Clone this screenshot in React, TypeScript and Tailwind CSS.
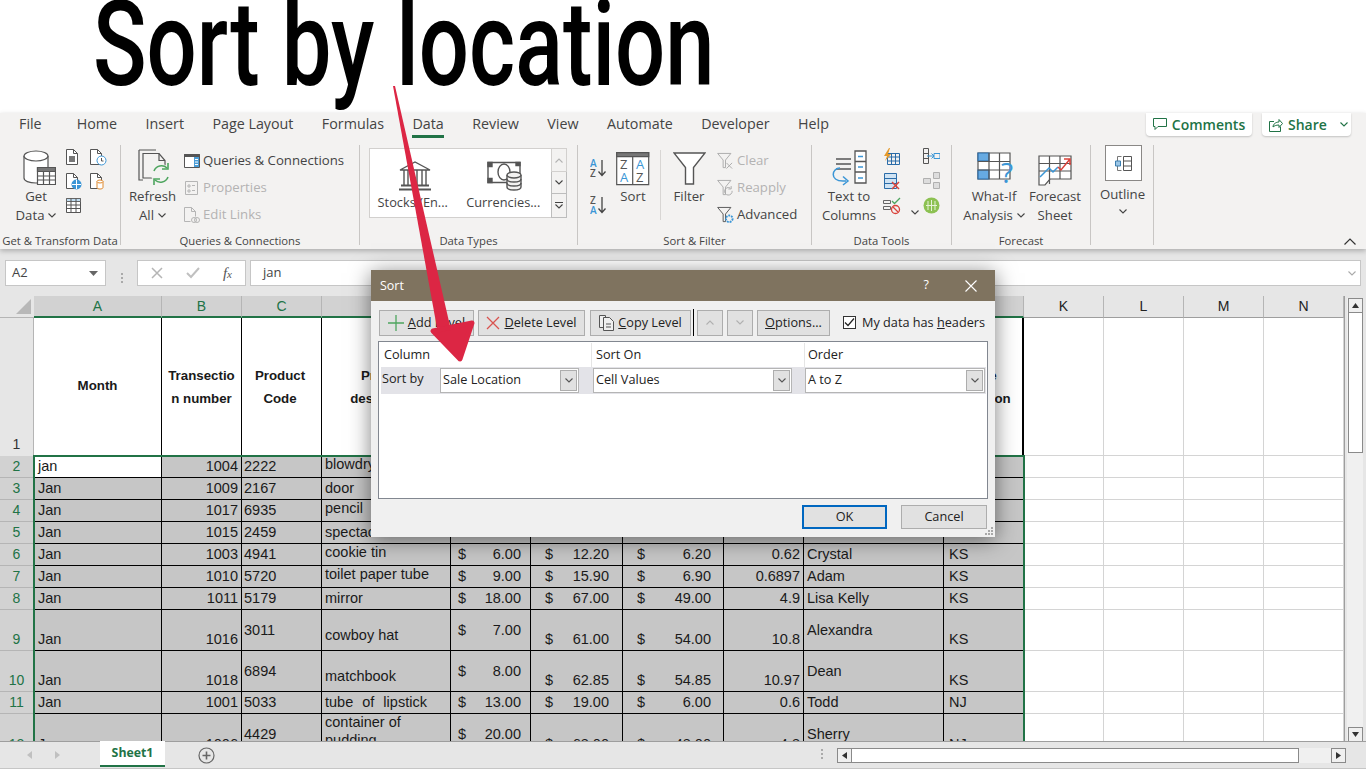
import type { ReactNode } from 'react'

const STROKE = '#555'
const BLUE = '#3b96d6'

const Chev = ({ up = false, color = '#444' }: { up?: boolean; color?: string }) => (
  <svg width="8" height="5" viewBox="0 0 8 5" fill="none" stroke={color} strokeWidth="1.1">
    <path d={up ? 'M.5 4.5 4 1l3.5 3.5' : 'M.5.5 4 4 7.5.5'} />
  </svg>
)

const Doc = ({ children }: { children?: ReactNode }) => (
  <svg width="18" height="18" viewBox="0 0 18 18" fill="none" stroke={STROKE}>
    <path d="M1.5 1.5h7l4 4v11h-11z" fill="#fff" />
    <path d="M8.5 1.5v4h4" />
    {children}
  </svg>
)

const TableIcon = () => (
  <svg width="17" height="17" viewBox="0 0 17 17" fill="none" stroke={STROKE}>
    <path d="M1.5 1.5h14v14h-14z" fill="#fff" />
    <path d="M1.5 1.5h14v3h-14z" fill="#bfdcf0" stroke="#666" />
    <path d="M1.5 8h14M1.5 11.5h14M6 1.5v14M11 1.5v14" />
  </svg>
)

const GetDataIcon = () => (
  <svg className="ml-[6px]" width="33" height="36" viewBox="0 0 33 36" fill="none" stroke={STROKE} strokeWidth="1.2">
    <path d="M1 6v22c0 3 5 5 12 5s12-2 12-5V6" fill="#fff" />
    <ellipse cx="13" cy="6" rx="12" ry="5" fill="#fff" />
    <path d="M14.5 17.5h18v17h-18z" fill="#fff" />
    <path d="M14.5 17.5h18v4h-18z" fill="#777" />
    <path d="M14.5 26h18M14.5 30h18M20.5 21v13.5M26.5 21v13.5" />
  </svg>
)

const RefreshIcon = () => (
  <svg className="ml-[4px]" width="34" height="37" viewBox="0 0 34 37" fill="none" stroke={STROKE} strokeWidth="1.2">
    <path d="M1 1h17M1 1v30h4" />
    <path d="M5 4.500h16l6 7V29H5z" fill="#f3f2f1" />
    <path d="M21 4.500v7h6" />
    <circle cx="23" cy="25" r="10" fill="#f3f2f1" stroke="none" />
    <path d="M16 22a8 8 0 0 1 13-3M30 28a8 8 0 0 1-13 3" stroke="#4ea55f" strokeWidth="1.600" />
    <path d="M30 14v6h-6M16 36v-6h6" stroke="#4ea55f" strokeWidth="1.600" />
  </svg>
)

const QueriesIcon = () => (
  <svg width="16" height="16" viewBox="0 0 16 16" fill="none" stroke={STROKE}>
    <path d="M.5 1.500h15v13H.5z" fill="#fff" />
    <path d="M.5 1.500h15v2H.5z" fill="#555" />
    <path d="M10 4h5v10h-5z" fill="#4a9cd6" stroke="none" />
    <path d="M11 6.500h3M11 9h3M11 11.500h3" stroke="#fff" />
  </svg>
)

const PropertiesIcon = () => (
  <svg width="15" height="16" viewBox="0 0 15 16" fill="none" stroke="#b5b5b5">
    <path d="M1.500 1.500h12v13h-12z" />
    <path d="M4 5h2v2H4zM4 10h2v2H4zM8 5.500h3M8 10.500h3" />
  </svg>
)

const EditLinksIcon = () => (
  <svg width="17" height="18" viewBox="0 0 17 18" fill="none" stroke="#b5b5b5">
    <path d="M1.500 1.500h7l4 4v5M1.500 1.500v14h6" />
    <path d="M8.500 1.500v4h4" />
    <circle cx="11" cy="14" r="2.500" />
    <circle cx="14" cy="14" r="2.500" />
  </svg>
)

const Bank = () => (
  <svg className="ml-[5px]" width="34" height="30" viewBox="0 0 34 30" fill="none" stroke={STROKE} strokeWidth="1.400">
    <path d="M2 9 17 1l15 8z" />
    <path d="M6 9v15M10 9v15M15 9v15M19 9v15M24 9v15M28 9v15" />
    <path d="M3 24.500h28M1 28.500h32" strokeWidth="2" />
  </svg>
)

const Money = () => (
  <svg className="ml-[3px]" width="35" height="30" viewBox="0 0 35 30" fill="none" stroke={STROKE} strokeWidth="1.400">
    <path d="M1 1.500h32v20H1z" />
    <path d="M1 1.500h4v4H1zM29 1.500h4v3h-4zM1 17.500h4v4H1z" fill={STROKE} />
    <ellipse cx="17" cy="11" rx="6" ry="8" />
    <g fill="#f3f2f1">
      <path d="M20 14v12c0 2 3 3 7 3s7-1 7-3V14" />
      <ellipse cx="27" cy="14" rx="7" ry="3" />
      <path d="M20 18c0 2 3 3 7 3s7-1 7-3M20 22c0 2 3 3 7 3s7-1 7-3" fill="none" />
    </g>
  </svg>
)

const AzSmall = ({ flip = false }: { flip?: boolean }) => (
  <svg width="17" height="21" viewBox="0 0 17 21" fill="none">
    <text x="0" y="9" fontSize="10" fontFamily="Open Sans" fontWeight="600" fill={flip ? '#555' : BLUE}>{flip ? 'Z' : 'A'}</text>
    <text x="0" y="19" fontSize="10" fontFamily="Open Sans" fontWeight="600" fill={flip ? BLUE : '#555'}>{flip ? 'A' : 'Z'}</text>
    <path d="M12 2v15M8.500 13.500 12 17.500l3.500-4" stroke="#444" strokeWidth="1.300" />
  </svg>
)

const SortIcon = () => (
  <svg width="34" height="34" viewBox="0 0 34 34" fill="none" stroke={STROKE} strokeWidth="1.200">
    <path d="M.7.700h32v32H.7z" fill="#fff" />
    <path d="M.7.700h32v4H.7z" fill="#777" />
    <path d="M16.700 4.700v28" />
    <g stroke="none" fontFamily="Open Sans" fontSize="13">
      <text x="4" y="17" fill="#555">Z</text>
      <text x="4" y="30" fill={BLUE}>A</text>
      <text x="20" y="17" fill={BLUE}>A</text>
      <text x="20" y="30" fill="#555">Z</text>
    </g>
  </svg>
)

const FilterIcon = () => (
  <svg width="33" height="34" viewBox="0 0 33 34" fill="#fff" stroke={STROKE} strokeWidth="1.400">
    <path d="M1 1h31L20.500 15.500V32h-8V15.500z" />
  </svg>
)

const SmallFunnel = ({ color, children }: { color: string; children?: ReactNode }) => (
  <svg width="18" height="18" viewBox="0 0 18 18" fill="none" stroke={color}>
    <path d="M.7 1h14L9 8v8H6.500V8z" />
    {children}
  </svg>
)

const TextColumns = () => (
  <svg width="38" height="36" viewBox="0 0 38 36" fill="none" stroke={STROKE} strokeWidth="1.300">
    <path d="M6 9h15M6 14h15M6 19h15" />
    <path d="M25 1h11v32H25z" fill="#fff" />
    <path d="M25 11.500h11M25 22h11" />
    <path d="M28 6.500h5M28 17h5M28 28h5" stroke={BLUE} />
    <path d="M10 18C2 18-1 31 13 31h3M13 26.500l5 4.500-5 4" stroke={BLUE} strokeWidth="1.500" />
  </svg>
)

const FlashFill = () => (
  <svg width="17" height="17" viewBox="0 0 17 17" fill="none">
    <path d="M4.500 5.500h12v11h-12z" stroke="#2b6ca8" />
    <path d="M4.500 9h12M4.500 13h12M8.500 5.500v11M12.500 5.500v11" stroke="#2b6ca8" />
    <path d="M6 0 1 8h3l-2 5 6-7H5l2-6z" fill="#e59a2b" />
  </svg>
)

const RemoveDup = () => (
  <svg width="17" height="18" viewBox="0 0 17 18" fill="none">
    <path d="M1.500 1.500h12v15h-12z" fill="#cfe3f3" stroke="#2b6ca8" />
    <path d="M1.500 6.500h12M1.500 11.500h12" stroke="#2b6ca8" />
    <path d="M9 10l7 7M16 10l-7 7" stroke="#d9423a" strokeWidth="1.500" />
  </svg>
)

const Validation = () => (
  <svg width="18" height="18" viewBox="0 0 18 18" fill="none" stroke="#666">
    <path d="M.5 3.500h7v3h-7zM.5 9.500h7v3h-7z" />
    <path d="M9 4l2.500 2.500L17 1" stroke="#4ea55f" strokeWidth="1.300" />
    <circle cx="12.500" cy="12.500" r="4" stroke="#d9423a" strokeWidth="1.300" />
    <path d="m10 10 5 5" stroke="#d9423a" strokeWidth="1.300" />
  </svg>
)

const Consolidate = () => (
  <svg width="17" height="16" viewBox="0 0 17 16" fill="none" stroke="#555">
    <path d="M.5.500h5v15h-5zM.5 5.500h5M.5 10.500h5" />
    <path d="M4 8h7M8.500 5.500 11 8l-2.500 2.500" stroke={BLUE} />
    <path d="M11 5.500h6v5h-6z" stroke={BLUE} />
  </svg>
)

const Relations = () => (
  <svg width="17" height="17" viewBox="0 0 17 17" fill="#ddd" stroke="#b0b0b0">
    <path d="M.5 6.500h7v5h-7zM10.500.500h6v6h-6zM10.500 10.500h6v6h-6z" />
  </svg>
)

const DataModel = () => (
  <svg width="17" height="17" viewBox="0 0 17 17">
    <circle cx="8.500" cy="8.500" r="8" fill="#8cc152" />
    <path d="M5 4v9M8.500 3v11M12 4v9M3 8.500h11" stroke="#e6f2d8" fill="none" />
  </svg>
)

const WhatIf = () => (
  <svg className="ml-[2px]" width="37" height="34" viewBox="0 0 37 34" fill="none" stroke={STROKE} strokeWidth="1.200">
    <path d="M1 1h32v26H1z" fill="#fff" />
    <path d="M1 1h11v8H1zM1 18h11v9H1z" fill="#66aae2" stroke="#2b6ca8" />
    <path d="M1 9.500h32M1 18h32M12 1v26M22.500 1v26" />
    <text x="24" y="31" fontSize="28" fontFamily="Open Sans" fill="#3b96d6" stroke="none">?</text>
  </svg>
)

const Forecast = () => (
  <svg width="34" height="31" viewBox="0 0 34 31" fill="none" stroke={STROKE} strokeWidth="1.200">
    <path d="M1 1h32v23H12l-5 6H1z" fill="#fff" />
    <path d="M1 8.500h32M1 16h32M11.500 1v28M22 1v23" />
    <path d="M2 22 11 13l4 4 5-5" stroke={BLUE} strokeWidth="1.500" />
    <path d="M20 12l3 3 9-11M26 4h6v6" stroke="#d9423a" strokeWidth="1.500" />
  </svg>
)

const OutlineIcon = () => (
  <svg width="17" height="15" viewBox="0 0 17 15" fill="none" stroke="#777">
    <path d="M2.500.500h4M2.500 14.500h4M2.500.500v14" />
    <path d="M.5 5h5v5h-5z" fill="#9cc6e6" stroke="#3b7eb0" />
    <path d="M8.500.500h8v14h-8zM8.500 5h8M8.500 10h8" stroke="#555" />
  </svg>
)

const Large = ({ w, icon, l1, l2, chev = false }: { w: string; icon: ReactNode; l1: string; l2: string; chev?: boolean }) => (
  <div className={`flex flex-col items-center shrink-0 ${w}`}>
    <div className="h-[42px] flex items-end justify-center pb-[1px]">{icon}</div>
    <div className="leading-[19px] text-center">{l1}</div>
    <div className="leading-[19px] flex items-center gap-[4px] whitespace-nowrap">
      {l2}
      {chev && <Chev />}
    </div>
  </div>
)

const SmallRow = ({ icon, label, off = false }: { icon: ReactNode; label: string; off?: boolean }) => (
  <div className={`h-[27px] flex items-center gap-[3px] whitespace-nowrap ${off ? 'text-[#b3b3b3]' : ''}`}>
    <div className="w-[17px] flex justify-center">{icon}</div>
    {label}
  </div>
)

const Sep = () => <div className="w-px h-[100px] mt-[5px] bg-[#c8c6c4] shrink-0" />

const Group = ({ w, label, children }: { w: string; label: string; children: ReactNode }) => (
  <div className={`${w} shrink-0 flex flex-col h-[109px] pt-[5px]`}>
    <div className="h-[88px] flex">{children}</div>
    <div className="h-[16px] leading-[16px] text-center text-[11.3px] whitespace-nowrap">{label}</div>
  </div>
)

const TABS = ['Home', 'Insert', 'Page Layout', 'Formulas', 'Data', 'Review', 'View', 'Automate', 'Developer', 'Help']

const Ribbon = () => (
  <div className="bg-[#f3f2f1] h-[136px] shrink-0 text-[#444] text-[13.2px] shadow-[0_2px_5px_rgba(0,0,0,0.25)] relative z-10 font-['Open_Sans',sans-serif]">
    <div className="h-[27px] flex text-[14.3px]">
      <div className="ml-[19px] mr-[35px] leading-[22px]">File</div>
      <div className="flex gap-[28.4px]">
        {TABS.map((t) => (
          <div key={t} className={`h-[25px] leading-[22px] ${t === 'Data' ? 'border-b-[3px] border-[#217346]' : ''}`}>{t}</div>
        ))}
      </div>
      <div className="ml-auto flex gap-[10px] mr-[15px] text-[#217346] font-semibold text-[14px]">
        <div className="w-[106px] h-[23px] bg-white rounded-b-sm shadow-[0_1px_2px_rgba(0,0,0,0.2)] flex items-center justify-center gap-[5px]">
          <svg width="14" height="13" viewBox="0 0 14 13" fill="none" stroke="#217346"><path d="M.5.500h13v8H5l-3 3v-3H.5z" /></svg>
          Comments
        </div>
        <div className="w-[89px] h-[23px] bg-white rounded-b-sm shadow-[0_1px_2px_rgba(0,0,0,0.2)] flex items-center pl-[7px] gap-[5px]">
          <svg width="14" height="14" viewBox="0 0 14 14" fill="none" stroke="#217346"><path d="M5 3.500H.5v10h11v-5M4 9c0-3 3-5 6-5V1.500l3.500 4-3.500 4V7C7 7 5 8 4 9z" /></svg>
          Share
          <span className="ml-[8px]"><Chev color="#217346" /></span>
        </div>
      </div>
    </div>
    <div className="flex h-[109px]">
      <Group w="w-[120px]" label="Get & Transform Data">
        <div className="ml-[8px]"><Large w="w-[56px]" icon={<GetDataIcon />} l1="Get" l2="Data" chev /></div>
        <div className="ml-[1px] pt-[3px] grid grid-cols-[24px_18px] grid-rows-[24px_25px_20px]">
          <Doc><path d="M4 8h6v6H4z" fill="#777" stroke="none" /></Doc>
          <Doc><circle cx="12.500" cy="12.500" r="4.500" fill="#fff" stroke={BLUE} /><path d="M12.500 10v3h2" stroke="#555" /></Doc>
          <Doc><circle cx="11.500" cy="12.500" r="5" fill={BLUE} stroke="none" /><path d="M7 12.500h9M11.500 8v9" stroke="#fff" /></Doc>
          <Doc><path d="M8 9.500v6c0 2 6 2 6 0v-6z" fill="#fff" stroke="#e08a2e" /><ellipse cx="11" cy="9.500" rx="3" ry="1.500" fill="#fff" stroke="#e08a2e" /></Doc>
          <TableIcon />
        </div>
      </Group>
      <Sep />
      <Group w="w-[238px]" label="Queries & Connections">
        <div className="ml-[1px]"><Large w="w-[61px]" icon={<RefreshIcon />} l1="Refresh" l2="All" chev /></div>
        <div className="pt-[2px]">
          <SmallRow icon={<QueriesIcon />} label="Queries & Connections" />
          <SmallRow off icon={<PropertiesIcon />} label="Properties" />
          <SmallRow off icon={<EditLinksIcon />} label="Edit Links" />
        </div>
      </Group>
      <Sep />
      <Group w="w-[217px]" label="Data Types">
        <div className="ml-[9px] mt-[3px] flex h-[70px] text-[12.8px]">
          <div className="w-[183px] bg-white border border-[#d2d0ce] flex">
            <div className="w-[86px] flex flex-col items-center">
              <div className="h-[42px] flex items-end"><Bank /></div>
              <div className="leading-[22px]">Stocks (En...</div>
            </div>
            <div className="w-[96px] flex flex-col items-center">
              <div className="h-[42px] flex items-end"><Money /></div>
              <div className="leading-[22px]">Currencies...</div>
            </div>
          </div>
          <div className="w-[16px] flex flex-col -ml-px">
            <div className="h-[24px] border border-[#d2d0ce] flex items-center justify-center"><Chev up color="#b3b3b3" /></div>
            <div className="h-[22px] border border-t-0 border-[#bdbdbd] flex items-center justify-center"><Chev /></div>
            <div className="h-[24px] border border-t-0 border-[#bdbdbd] flex flex-col items-center justify-center gap-[1px]">
              <div className="w-[8px] h-px bg-[#444]" />
              <Chev />
            </div>
          </div>
        </div>
      </Group>
      <Sep />
      <Group w="w-[233px]" label="Sort & Filter">
        <div className="ml-[12px] w-[22px] pt-[13px] flex flex-col gap-[16px]"><AzSmall /><AzSmall flip /></div>
        <Large w="w-[42px]" icon={<SortIcon />} l1="Sort" l2="" />
        <div className="w-px h-[70px] mt-[5px] ml-[6px] bg-[#d8d6d4]" />
        <div className="ml-[7px]"><Large w="w-[42px]" icon={<FilterIcon />} l1="Filter" l2="" /></div>
        <div className="ml-[7px] pt-[2px]">
          <SmallRow off icon={<SmallFunnel color="#aaa"><path d="M10 11l6 6M16 11l-6 6" /></SmallFunnel>} label="Clear" />
          <SmallRow off icon={<SmallFunnel color="#aaa"><path d="M16 12a4 4 0 1 1-2-3M15 7v3h-3" /></SmallFunnel>} label="Reapply" />
          <SmallRow icon={<SmallFunnel color="#555"><circle cx="13" cy="13" r="3.500" stroke={BLUE} strokeWidth="2" strokeDasharray="2 1" /></SmallFunnel>} label="Advanced" />
        </div>
      </Group>
      <Sep />
      <Group w="w-[139px]" label="Data Tools">
        <div className="ml-[10px]"><Large w="w-[54px]" icon={<TextColumns />} l1="Text to" l2="Columns" /></div>
        <div className="ml-[7px] pt-[3px] flex flex-col gap-[7px] w-[18px]"><FlashFill /><RemoveDup /><Validation /></div>
        <div className="ml-[10px] w-[12px] pt-[65px]"><Chev /></div>
        <div className="pt-[3px] flex flex-col gap-[8px]"><Consolidate /><Relations /><DataModel /></div>
      </Group>
      <Sep />
      <Group w="w-[138px]" label="Forecast">
        <div className="ml-[10px]"><Large w="w-[64px]" icon={<WhatIf />} l1="What-If" l2="Analysis" chev /></div>
        <Large w="w-[58px]" icon={<Forecast />} l1="Forecast" l2="Sheet" />
      </Group>
      <Sep />
      <Group w="w-[62px]" label="">
        <div className="w-full flex flex-col items-center pl-[1px]">
          <div className="w-[37px] h-[36px] bg-white border border-[#8a8886] flex items-center justify-center ml-[1px]"><OutlineIcon /></div>
          <div className="leading-[19px] mt-[4px]">Outline</div>
          <div className="mt-[5px]"><Chev /></div>
        </div>
      </Group>
      <Sep />
      <div className="ml-auto self-end mr-[10px] mb-[4px]">
        <svg width="12" height="7" viewBox="0 0 12 7" fill="none" stroke="#333" strokeWidth="1.200"><path d="M.5 6.500 6 1l5.500 5.500" /></svg>
      </div>
    </div>
  </div>
)

const FormulaBar = () => (
  <div className="h-[47px] shrink-0 bg-[#e6e6e6] flex pt-[11px] pl-[5px] pr-[5px] font-['Open_Sans',sans-serif] text-[13px] text-[#444]">
    <div className="w-[101px] h-[26px] bg-white border border-[#c6c6c6] flex items-center justify-between pl-[6px] pr-[7px]">
      A2
      <svg width="9" height="5" viewBox="0 0 9 5" fill="#666"><path d="M0 0h9L4.500 5z" /></svg>
    </div>
    <div className="w-[31px] flex flex-col items-center justify-center gap-[2px]">
      <div className="w-[2px] h-[2px] bg-[#aaa]" /><div className="w-[2px] h-[2px] bg-[#aaa]" /><div className="w-[2px] h-[2px] bg-[#aaa]" />
    </div>
    <div className="w-[109px] h-[26px] bg-white border border-[#c6c6c6] flex items-center justify-between px-[13px]">
      <svg width="12" height="12" viewBox="0 0 12 12" stroke="#b5b5b5" strokeWidth="1.500"><path d="m1 1 10 10M11 1 1 11" /></svg>
      <svg width="14" height="12" viewBox="0 0 14 12" fill="none" stroke="#c0c0c0" strokeWidth="2"><path d="m1 6 4 4 8-9" /></svg>
      <span className="font-['Liberation_Serif',serif] italic text-[15px] text-[#555]">f<span className="text-[11px]">x</span></span>
    </div>
    <div className="ml-[4px] flex-1 h-[26px] bg-white border border-[#c6c6c6] flex items-center justify-between pl-[12px] pr-[4px]">
      jan
      <Chev color="#aaa" />
    </div>
  </div>
)

type VAlign = 'mid' | 'top' | 'low' | 'end'
type CellText = { t?: ReactNode; a?: VAlign }

const V_CLASS: Record<VAlign, string> = {
  mid: 'items-center',
  top: 'items-start leading-[16px]',
  low: 'items-end pb-[3px]',
  end: 'items-end leading-[22px]',
}

const Box = ({ a = 'mid', className = '', children }: { a?: VAlign; className?: string; children?: ReactNode }) => (
  <div className={`flex min-w-0 overflow-hidden whitespace-nowrap border-r border-b border-black ${V_CLASS[a]} ${className}`}>
    {children}
  </div>
)

const Money$ = ({ v, a = 'mid', left, right, extra = '' }: { v?: string; a?: VAlign; left: string; right: string; extra?: string }) => (
  <Box a={a} className={`bg-[#c6c6c6] justify-between ${left} ${right} ${extra}`}>
    {v && <><span>$</span><span>{v}</span></>}
  </Box>
)

type Row = {
  n: number
  tall?: boolean
  month: string
  tr: string
  code: string
  desc?: CellText
  e?: string
  f?: string
  g?: string
  h?: string
  i?: string
  j?: string
}

const ROWS: Row[] = [
  { n: 2, month: 'jan', tr: '1004', code: '2222', desc: { t: 'blowdryer', a: 'top' } },
  { n: 3, month: 'Jan', tr: '1009', code: '2167', desc: { t: 'door' } },
  { n: 4, month: 'Jan', tr: '1017', code: '6935', desc: { t: 'pencil', a: 'top' } },
  { n: 5, month: 'Jan', tr: '1015', code: '2459', desc: { t: 'spectacles' } },
  { n: 6, month: 'Jan', tr: '1003', code: '4941', desc: { t: 'cookie tin', a: 'top' }, e: '6.00', f: '12.20', g: '6.20', h: '0.62', i: 'Crystal', j: 'KS' },
  { n: 7, month: 'Jan', tr: '1010', code: '5720', desc: { t: 'toilet paper tube', a: 'top' }, e: '9.00', f: '15.90', g: '6.90', h: '0.6897', i: 'Adam', j: 'KS' },
  { n: 8, month: 'Jan', tr: '1011', code: '5179', desc: { t: 'mirror' }, e: '18.00', f: '67.00', g: '49.00', h: '4.9', i: 'Lisa Kelly', j: 'KS' },
  { n: 9, tall: true, month: 'Jan', tr: '1016', code: '3011', desc: { t: 'cowboy hat', a: 'low' }, e: '7.00', f: '61.00', g: '54.00', h: '10.8', i: 'Alexandra', j: 'KS' },
  { n: 10, tall: true, month: 'Jan', tr: '1018', code: '6894', desc: { t: 'matchbook', a: 'low' }, e: '8.00', f: '62.85', g: '54.85', h: '10.97', i: 'Dean', j: 'KS' },
  { n: 11, month: 'Jan', tr: '1001', code: '5033', desc: { t: <span className="[word-spacing:5px]">tube of lipstick</span> }, e: '13.00', f: '19.00', g: '6.00', h: '0.6', i: 'Todd', j: 'NJ' },
  { n: 12, tall: true, month: 'Jan', tr: '1006', code: '4429', desc: { t: <span className="block leading-[18px] -mt-[1px]">container of<br />pudding</span>, a: 'top' }, e: '20.00', f: '68.00', g: '48.00', h: '4.8', i: 'Sherry', j: 'NJ' },
]

const COLS = ['A', 'B', 'C', 'D', 'E', 'F', 'G', 'H', 'I', 'J']
const FREE = ['K', 'L', 'M', 'N']

const Head = ({ l1, l2, className = '' }: { l1?: string; l2?: string; className?: string }) => (
  <div className={`bg-white border-r border-black flex flex-col items-center pt-[46px] font-bold text-[13.3px] leading-[23px] whitespace-nowrap overflow-hidden ${className}`}>
    <div>{l1}</div>
    <div>{l2}</div>
  </div>
)

const FreeCells = () => (
  <>
    {FREE.map((c) => <div key={c} className="border-r border-b border-[#d4d4d4] bg-white" />)}
    <div className="bg-white" />
  </>
)

const Sheet = () => (
  <div className="relative h-[445px] w-[1344px] overflow-hidden bg-white font-['Liberation_Sans',Arial,sans-serif] text-[14.5px] text-[#1a1a1a] grid grid-cols-[34px_128px_80px_80px_129px_80px_92px_101px_80px_140px_80px_80px_80px_80px_80px_0px] grid-rows-[22px_138px_22px_22px_22px_22px_22px_22px_22px_41px_41px_22px_42px]">
    <div className="bg-[#e6e6e6] border-b border-[#b5b5b5] flex items-end justify-end p-[3px]">
      <svg width="15" height="15" viewBox="0 0 15 15"><path d="M15 0v15H0z" fill="#b8b8b8" /></svg>
    </div>
    {COLS.map((c) => (
      <div key={c} className="bg-[#d2d2d2] border-r border-[#b5b5b5] border-b-2 border-b-[#217346] flex items-center justify-center text-[#217346] text-[14px]">{c}</div>
    ))}
    {FREE.map((c) => (
      <div key={c} className="bg-[#e6e6e6] border-r border-[#b5b5b5] border-b border-b-[#9e9e9e] flex items-center justify-center text-[#222] text-[14px]">{c}</div>
    ))}
    <div className="bg-[#e6e6e6]" />

    <div className="bg-[#e6e6e6] border-r border-[#b5b5b5] flex items-end justify-center text-[#333] text-[14px] pb-[1px]">1</div>
    <div className="bg-white border-r border-black flex items-center justify-center font-bold text-[13.3px] pb-[2px]">Month</div>
    <Head l1="Transectio" l2="n number" />
    <Head l1="Product" l2="Code" className="pr-[3px]" />
    <Head l1="Product" l2="description" />
    <Head />
    <Head />
    <Head />
    <Head />
    <Head />
    <div className="bg-white border-r-2 border-black flex flex-col items-center pt-[46px] font-bold text-[13.3px] leading-[23px]">
      <div>Sale</div>
      <div>Location</div>
    </div>
    <FreeCells />

    {ROWS.map((r) => {
      const lift = r.n === 9 || r.n === 10 ? 'pt-[2px]' : ''
      return (
        <div key={r.n} className="contents">
          <div className={`bg-[#d2d2d2] border-r border-b border-[#b5b5b5] flex justify-center text-[#217346] text-[14px] ${r.tall ? 'items-end leading-[22px]' : 'items-center'}`}>{r.n}</div>
          <Box a={r.tall ? 'end' : 'mid'} className={`pl-[4px] ${r.n === 2 ? 'bg-white' : 'bg-[#c6c6c6]'}`}>{r.month}</Box>
          <Box a={r.tall ? 'end' : 'mid'} className="bg-[#c6c6c6] justify-end pr-[3px]">{r.tr}</Box>
          <Box a="mid" className={`bg-[#c6c6c6] pl-[2px] ${lift}`}>{r.code}</Box>
          <Box a={r.desc?.a} className="bg-[#c6c6c6] pl-[3px]">{r.desc?.t}</Box>
          <Money$ v={r.e} a="mid" left="pl-[7px]" right="pr-[9px]" extra={lift} />
          <Money$ v={r.f} a={r.tall ? 'end' : 'mid'} left="pl-[14px]" right="pr-[13px]" />
          <Money$ v={r.g} a={r.tall ? 'end' : 'mid'} left="pl-[14px]" right="pr-[12px]" />
          <Box a={r.tall ? 'end' : 'mid'} className="bg-[#c6c6c6] justify-end pr-[3px]">{r.h}</Box>
          <Box a="mid" className={`bg-[#c6c6c6] pl-[3px] ${lift}`}>{r.i}</Box>
          <Box a={r.tall ? 'end' : 'mid'} className="bg-[#c6c6c6] pl-[5px]">{r.j}</Box>
          <FreeCells />
        </div>
      )
    })}

    {/* selected range outline */}
    <div className="absolute left-[33px] top-[159px] w-[992px] h-[300px] border-2 border-[#217346] pointer-events-none" />
  </div>
)

const ArrowBox = ({ className = '', right = false, down = false }: { className?: string; right?: boolean; down?: boolean }) => (
  <div className={`w-[15px] h-[15px] bg-[#f0f0f0] border border-[#8a8a8a] flex items-center justify-center ${className}`}>
    <svg width="7" height="7" viewBox="0 0 7 7" fill="#333">
      {right ? <path d="M1 0l5 3.500-5 3.500z" /> : down ? <path d="M0 1h7L3.500 6z" /> : <path d="M0 6h7L3.500 1z" />}
    </svg>
  </div>
)

const VScroll = () => (
  <div className="w-[22px] h-[445px] bg-[#e6e6e6] border-l border-[#9e9e9e] flex">
    <div className="ml-[2px] mt-[2px] w-[16px] bg-[#f0f0f0] flex flex-col items-center">
      <ArrowBox />
      <div className="w-[15px] h-[140px] bg-white border border-t-0 border-[#8a8a8a]" />
      <ArrowBox down className="mt-auto mb-[-1px]" />
    </div>
  </div>
)

const SheetTabs = () => (
  <div className="h-[28px] shrink-0 bg-[#e6e6e6] border-t border-[#9e9e9e] border-b border-b-[#c6c6c6] flex font-['Open_Sans',sans-serif]">
    <div className="w-[100px] flex items-center pl-[27px] gap-[23px]">
      <svg width="5" height="8" viewBox="0 0 5 8" fill="#c0c0c0"><path d="M5 0v8L0 4z" /></svg>
      <svg width="5" height="8" viewBox="0 0 5 8" fill="#c0c0c0"><path d="M0 0v8l5-4z" /></svg>
    </div>
    <div className="w-[65px] h-[26px] -mt-px bg-white border-b-2 border-[#217346] flex items-center justify-center text-[12.3px] font-bold text-[#217346] pt-[1px]">Sheet1</div>
    <div className="ml-[33px] flex items-center">
      <svg width="17" height="17" viewBox="0 0 17 17" fill="none" stroke="#666" strokeWidth="1.200"><circle cx="8.500" cy="8.500" r="7.500" /><path d="M4.500 8.500h8M8.500 4.500v8" strokeWidth="1.600" /></svg>
    </div>
    <div className="ml-[605px] flex items-center pb-[2px] flex-col justify-center gap-[2px] w-[3px]">
      <div className="w-[2px] h-[2px] bg-[#aaa]" /><div className="w-[2px] h-[2px] bg-[#aaa]" /><div className="w-[2px] h-[2px] bg-[#aaa]" />
    </div>
    <div className="ml-[14px] mt-[6px] flex h-[15px]">
      <ArrowBox className="rotate-180" right />
      <div className="w-[447px] h-[15px] bg-white border border-l-0 border-[#8a8a8a]" />
      <div className="w-[32px] bg-[#f0f0f0]" />
      <ArrowBox right />
    </div>
  </div>
)

const DlgBtn = ({ w, className = '', children }: { w: string; className?: string; children: ReactNode }) => (
  <div className={`${w} h-[26px] bg-[#e1e1e1] border border-[#adadad] flex items-center justify-center gap-[4px] shrink-0 ${className}`}>{children}</div>
)

const Combo = ({ w, text }: { w: string; text: string }) => (
  <div className={`${w} h-[25px] bg-white border border-[#b5b5b5] flex items-center justify-between pl-[2px] pr-[1px] shrink-0`}>
    <span className="pb-[1px]">{text}</span>
    <div className="w-[17px] h-[21px] bg-[#e1e1e1] border border-[#adadad] flex items-center justify-center">
      <Chev color="#555" />
    </div>
  </div>
)

const SortDialog = () => (
  <div className="absolute left-[371px] top-[270px] w-[624px] h-[267px] bg-[#f0f0f0] z-20 shadow-[0_3px_20px_rgba(0,0,0,0.5)] flex flex-col font-['Open_Sans',sans-serif] text-[12.7px] text-[#222]">
    <div className="h-[31px] bg-[#7f735f] flex items-center text-white text-[12.5px] pl-[9px]">
      <span className="pt-[1px]">Sort</span>
      <span className="ml-auto mr-[36px]">?</span>
      <svg className="mr-[18px]" width="12" height="12" viewBox="0 0 12 12" stroke="#fff" strokeWidth="1.100"><path d="m.5.500 11 11M11.500.500l-11 11" /></svg>
    </div>
    <div className="flex items-center pt-[8px] pl-[8px]">
      <DlgBtn w="w-[95px]">
        <svg width="16" height="16" viewBox="0 0 16 16" stroke="#4ea55f" strokeWidth="1.300"><path d="M8 0v16M0 8h16" /></svg>
        <span><u>A</u>dd Level</span>
      </DlgBtn>
      <DlgBtn w="w-[107px]" className="ml-[4px]">
        <svg width="14" height="14" viewBox="0 0 14 14" stroke="#d9534f" strokeWidth="1.300"><path d="m1 1 12 12M13 1 1 13" /></svg>
        <span><u>D</u>elete Level</span>
      </DlgBtn>
      <DlgBtn w="w-[101px]" className="ml-[5px]">
        <svg width="15" height="16" viewBox="0 0 15 16" fill="#f0f0f0" stroke="#555"><path d="M.5.500h6v12h-6z" /><path d="M4.500 2.500h6l4 4v9h-10z" /><path d="M7 9h5M7 12h5" /></svg>
        <span><u>C</u>opy Level</span>
      </DlgBtn>
      <div className="w-px h-[27px] bg-black ml-[2px]" />
      <DlgBtn w="w-[26px]" className="ml-[3px]"><Chev up color="#b0b0b0" /></DlgBtn>
      <DlgBtn w="w-[26px]" className="ml-[4px]"><Chev color="#b0b0b0" /></DlgBtn>
      <DlgBtn w="w-[73px]" className="ml-[4px]"><span><u>O</u>ptions...</span></DlgBtn>
      <div className="w-[13px] h-[13px] ml-[13px] bg-white border border-[#333] flex items-center justify-center shrink-0">
        <svg width="11" height="9" viewBox="0 0 11 9" fill="none" stroke="#222" strokeWidth="1.200"><path d="m1 4.500 3 3 6-7" /></svg>
      </div>
      <span className="ml-[6px] whitespace-nowrap">My data has <u>h</u>eaders</span>
    </div>
    <div className="ml-[7px] mt-[5px] w-[610px] h-[158px] bg-white border border-[#828790] pl-[1px] pt-[1px]">
      <div className="h-[24px] flex items-center">
        <div className="w-[212px] pl-[4px] h-full flex items-center border-r border-[#e5e5e5]">Column</div>
        <div className="w-[213px] pl-[4px] h-full flex items-center border-r border-[#e5e5e5]">Sort On</div>
        <div className="pl-[3px]">Order</div>
      </div>
      <div className="ml-[1px] w-[605px] h-[27px] bg-[#e3e3e8] flex items-center pl-[1px]">
        <span className="w-[58px] pb-[4px]">Sort by</span>
        <Combo w="w-[139px]" text="Sale Location" />
        <span className="w-[14px]" />
        <Combo w="w-[199px]" text="Cell Values" />
        <span className="w-[13px]" />
        <Combo w="w-[180px]" text="A to Z" />
      </div>
    </div>
    <div className="flex justify-end pr-[8px] mt-[6px]">
      <div className="w-[85px] h-[24px] bg-[#e1e1e1] border-2 border-[#0067c0] flex items-center justify-center">OK</div>
      <div className="w-[86px] h-[24px] ml-[14px] bg-[#e1e1e1] border border-[#adadad] flex items-center justify-center">Cancel</div>
    </div>
    <svg className="absolute right-[1px] bottom-[1px]" width="9" height="9" viewBox="0 0 9 9" fill="#a8a8a8">
      <path d="M6 0h2v2H6zM3 3h2v2H3zM6 3h2v2H6zM0 6h2v2H0zM3 6h2v2H3zM6 6h2v2H6z" />
    </svg>
  </div>
)

export default function App() {
  return (
    <div className="relative w-[1366px] h-[771px] overflow-hidden bg-white flex flex-col">
      <div className="h-[113px] shrink-0 pl-[93px] overflow-hidden">
        <div className="font-['Roboto',sans-serif] font-medium text-[118px] leading-[100px] text-black whitespace-nowrap origin-left scale-x-[0.75] -mt-[5px]">Sort by location</div>
      </div>
      <Ribbon />
      <FormulaBar />
      <div className="flex shrink-0">
        <Sheet />
        <VScroll />
      </div>
      <SheetTabs />
      <SortDialog />
      {/* annotation arrow */}
      <svg className="absolute left-0 top-0 z-30 pointer-events-none" width="1366" height="771" viewBox="0 0 1366 771">
        <path d="M393 86h2l55 240-13 2z" fill="#dc2644" />
        <path d="M433 331 472 323 460 359z" fill="#dc2644" stroke="#dc2644" strokeWidth="5" strokeLinejoin="round" />
      </svg>
    </div>
  )
}
